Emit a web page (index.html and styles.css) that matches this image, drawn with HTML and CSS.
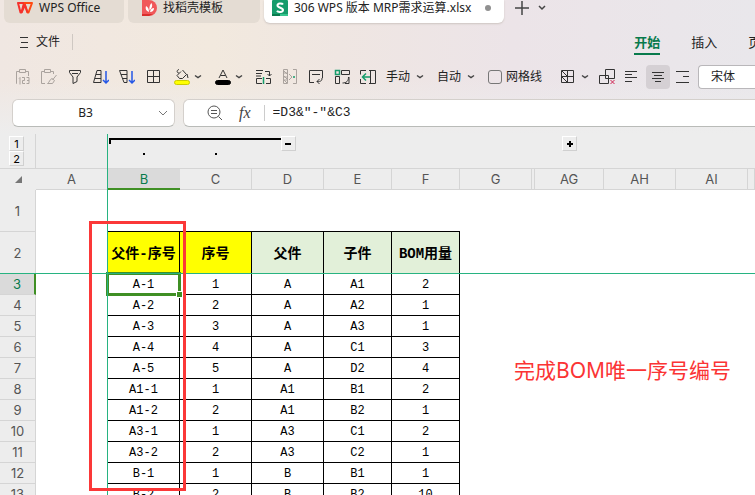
FILE: index.html
```html
<!DOCTYPE html>
<html lang="zh-CN">
<head>
<meta charset="utf-8">
<title>306 WPS 版本 MRP需求运算.xlsx</title>
<link rel="stylesheet" href="styles.css">
</head>
<body>
<header class="chrome">
  <div class="tabs">
    <button class="tab tab-home"><svg width="16" height="12" viewBox="0 0 16 12" fill="none" stroke="#f5322d" stroke-width="2" stroke-linejoin="round"><path d="M1 1h6L4.500 10.500H3.500z"/><path d="M7 1h8l-3.500 9.500h-1L7.500 2" stroke="#ff4a12"/><path d="M4.500 10.500L8 3l2.500 7.500"/></svg>WPS Office</button>
    <button class="tab tab-docer"><svg width="15" height="16" viewBox="0 0 15 16"><path d="M0 0h7a8 8 0 0 1 0 16H0z" fill="#f0585a"/><path d="M0 14h11l-4 2H0z" fill="#d92f2c"/><path d="M7 12C4 11 3 9 4 6c2 1 3 3 3 6zM7.500 10.500C7 7 8 4.500 9.500 3c1.500 2.500.5 5-2 7.500zM8 12c.5-2.500 2-4 4-4 0 2.500-1.500 4-4 4z" fill="#fff"/></svg>找稻壳模板</button>
    <button class="tab tab-file"><svg width="16" height="16" viewBox="0 0 16 16"><rect width="16" height="16" rx="1" fill="#159c6b"/><path d="M0 14h8v2H0z" fill="#087a4c"/><path d="M8 14h8v2H8z" fill="#35c58d"/><path d="M11 4.500C10 3 5.500 3 5.500 5.500S11 7.500 11 10s-5 2.500-6 .8" fill="none" stroke="#fff" stroke-width="2"/></svg><span class="file-name">306 WPS 版本 MRP需求运算.xlsx</span><i class="dirty"></i></button>
    <button class="add" aria-label="新建"><svg width="14" height="14" viewBox="0 0 14 14" stroke="#444" stroke-width="1.500"><path d="M7 0v14M0 7h14"/></svg></button>
    <button aria-label="标签列表"><svg width="8" height="6" viewBox="0 0 8 6" fill="none" stroke="#444" stroke-width="1.500"><path d="M1 1l3 3 3-3"/></svg></button>
  </div>

  <div class="menu">
    <div class="menu-left"><button class="file-menu"><svg width="8" height="12" viewBox="0 0 8 12" stroke="#333"><path d="M0 1.500h8M1 6.500h7M0 11.500h8"/></svg>文件</button></div>
    <nav><a href="#" class="current">开始</a><a href="#">插入</a><a href="#">页面</a></nav>
  </div>

  <div class="toolbar">
    <div class="group">
      <button aria-label="粘贴为数值"><svg class="ico dim" viewBox="0 0 16 16"><path d="M2 14.500H1.500v-12H4M11 2.500h2.500V7M4.500 .5h6v3h-6z"/><path d="M4 9.500l1-1v7M7 8.500h2.500v3H7.500v3H10M11.500 8.500H14v6h-2.500M12 11.500h2"/></svg></button>
      <button aria-label="格式刷"><svg class="ico dim" viewBox="0 0 16 16"><path d="M4 14.500H.5v-12H3M10 2.500h2.500V5M3.500 .5h6v3h-6z"/><path d="M15.500 6l-4 5M11 9.500l2.500 2-2 3H6.500c2-1 2-4 4.500-5z"/></svg></button>
      <button aria-label="筛选"><svg class="ico" viewBox="0 0 16 16"><path d="M2.500 1.500h11v2L10 8v4.500L6 14.500V8L2.500 3.500zM5 4.500h6"/></svg></button>
      <button aria-label="升序"><svg class="ico" viewBox="0 0 16 16"><path d="M4 1.500h4v12H.5zM3 5.500h5M2 9.500h6"/><path class="blue" d="M13 2v12M10 11l3 3 3-3"/></svg></button>
      <button aria-label="降序"><svg class="ico" viewBox="0 0 16 16"><path d="M.5 1.500H8v12H5zM2 5.500h6M3 9.500h5"/><path class="blue" d="M13 2v12M10 11l3 3 3-3"/></svg></button>
      <button aria-label="边框"><svg class="ico" viewBox="0 0 16 16"><path d="M2.500 1.500h12v12h-12zM8.500 1.500v12M2.500 7.500h12"/></svg></button>
    </div>
    <button class="split gap-md" aria-label="填充颜色"><svg class="ico" viewBox="0 0 16 16"><path d="M8.500 1l4 4.500-4 4H5.500l-2.500-3 4-4M5 .5C2.500 1 2.500 4 5 4M13 5l1 4"/><rect x=".5" y="11.500" width="15" height="4" rx="2" class="swatch-yellow"/></svg><svg class="caret" viewBox="0 0 8 6"><path d="M1 1.500l3 2 3-2"/></svg></button>
    <button class="split gap-md" aria-label="字体颜色"><svg class="ico" viewBox="0 0 16 16"><path d="M4 9l4-8 4 8M5.500 6.500h5"/><rect x=".5" y="11.500" width="15" height="4" rx="2" class="swatch-black"/></svg><svg class="caret" viewBox="0 0 8 6"><path d="M1 1.500l3 2 3-2"/></svg></button>
    <div class="group gap-md">
      <button aria-label="转置"><svg class="ico" viewBox="0 0 16 16"><path d="M0 1.500h7M0 4.500h6M9 2.500h4.500V7M11.500 5l2 2 2-2M6 9.500H.5v5H6M10 9.500h4.500v5H10M0 7h5"/><path class="green" d="M7.500 8v7"/></svg></button>
      <button aria-label="拆分"><svg class="ico dim" viewBox="0 0 16 16"><path d="M1.500.5h4v14h-4zM1.500 4h4M1.500 8h4M1.500 11h4M2 2l3 3M2 7l3 3M2 11l3 3M11 .5h3.500v14H11M7 5l3 3-3 3"/><path class="green" d="M11 8h2"/></svg></button>
      <button aria-label="自动换行"><svg class="ico" viewBox="0 0 16 16"><path d="M6 13.500H1.500v-12h13V9M4 5.500h8M14 9c0 3-1 3.500-5 3.500M11.500 10L9 12.500l2.500 2.500"/></svg></button>
      <button aria-label="转换"><svg class="ico" viewBox="0 0 16 16"><path d="M7.500 1.500h8v4h-8zM1.500 7.500v7h4v-7zM14.500 8c0 4-2 6-6 6M15 8v6.500H11"/><path class="green" d="M1.500 1.500h4v4h-4z"/></svg></button>
      <button aria-label="合并居中"><svg class="ico" viewBox="0 0 16 16"><path d="M6 1.500H.5v4M.5 10v4.500H6M9 1.500h6.500v13H9M10.500 1.500v13"/><path class="green" d="M3 8h7M6 4.500L2.500 8 6 11.500"/></svg></button>
    </div>
    <button class="drop gap-sm">手动<svg class="caret" viewBox="0 0 8 6"><path d="M1 1.500l3 2 3-2"/></svg></button>
    <button class="drop gap-md">自动<svg class="caret" viewBox="0 0 8 6"><path d="M1 1.500l3 2 3-2"/></svg></button>
    <label class="check gap-md"><input type="checkbox">网格线</label>
    <button class="split gap-lg" aria-label="表格样式"><svg class="ico" viewBox="0 0 16 16"><path d="M.5 1.500h12v12H.5zM6.500 1.500v12M.5 7.500h12M1 2l5 5M1 8l5 5"/></svg><svg class="caret" viewBox="0 0 8 6"><path d="M1 1.500l3 2 3-2"/></svg></button>
    <button class="gap-sm" aria-label="清除"><svg class="ico" viewBox="0 0 16 16"><path d="M6.500.5h9v9h-9zM9.500 10v4.500h-9v-8h9z"/><path class="red" d="M11.500 11l4 4M15.500 11l-4 4"/></svg></button>
    <button class="gap-sm" aria-label="左对齐"><svg class="ico" viewBox="0 0 16 16"><path d="M0 2.500h12M0 5.500h7M0 8.500h12M0 12.500h7"/></svg></button>
    <button class="align-on" aria-label="居中"><svg class="ico" viewBox="0 0 16 16"><path d="M2 3.500h12M4 6.500h8M2 9.500h12M5 12.500h6"/></svg></button>
    <button aria-label="右对齐"><svg class="ico" viewBox="0 0 16 16"><path d="M1 2.500h13M8 7.500h6M1 13.500h13"/></svg></button>
    <select class="font-select" aria-label="字体"><option>宋体</option></select>
  </div>

  <div class="formula-row">
    <div class="name-box"><input type="text" value="B3" aria-label="名称框"><svg width="10" height="6" viewBox="0 0 10 6" fill="none" stroke="#777"><path d="M1 1l4 4 4-4"/></svg></div>
    <div class="formula">
      <button aria-label="缩小"><svg width="16" height="16" viewBox="0 0 16 16" fill="none" stroke="#555"><circle cx="7" cy="7" r="6"/><path d="M11.500 11.500L15 15M4 5.500h6M4 8.500h6"/></svg></button>
      <button class="fx" aria-label="插入函数"><i>fx</i></button>
      <input type="text" value="=D3&amp;&quot;-&quot;&amp;C3" aria-label="编辑栏">
    </div>
  </div>
</header>

<main class="sheet">
  <div class="outline">
    <div class="levels"><button>1</button><button>2</button></div>
    <span class="bracket"></span>
    <span class="dot dot-b"></span><span class="dot dot-c"></span>
    <button class="toggle toggle-d" aria-label="折叠"><svg width="8" height="8" viewBox="0 0 8 8"><path d="M1 3h6v2H1z"/></svg></button>
    <button class="toggle toggle-ag" aria-label="展开"><svg width="8" height="8" viewBox="0 0 8 8"><path d="M1 3h6v2H1zM3 1h2v6H3z"/></svg></button>
  </div>

  <table>
    <colgroup><col class="w36"><col class="w72"><col class="w72"><col class="w72"><col class="w72"><col class="w68"><col class="w68"><col class="w72"><col class="w3"><col class="w69"><col class="w72"><col class="w72"><col></colgroup>
    <thead>
      <tr><th class="corner"><svg width="7" height="7" viewBox="0 0 7 7" fill="#777"><path d="M7 0v7H0z"/></svg></th><th>A</th><th class="active">B</th><th>C</th><th>D</th><th>E</th><th>F</th><th>G</th><th></th><th>AG</th><th>AH</th><th>AI</th><th></th></tr>
    </thead>
    <tbody>
      <tr class="tall above"><th>1</th><td></td><td></td><td></td><td></td><td></td><td></td></tr>
      <tr class="tall heads"><th>2</th><td></td><td class="yellow">父件-序号</td><td class="yellow">序号</td><td class="mint">父件</td><td class="mint">子件</td><td class="mint">BOM用量</td></tr>
      <tr class="current-row"><th>3</th><td></td><td class="selected">A-1<i class="handle"></i></td><td>1</td><td>A</td><td>A1</td><td>2</td></tr>
      <tr><th>4</th><td></td><td>A-2</td><td>2</td><td>A</td><td>A2</td><td>1</td></tr>
      <tr><th>5</th><td></td><td>A-3</td><td>3</td><td>A</td><td>A3</td><td>1</td></tr>
      <tr><th>6</th><td></td><td>A-4</td><td>4</td><td>A</td><td>C1</td><td>3</td></tr>
      <tr><th>7</th><td></td><td>A-5</td><td>5</td><td>A</td><td>D2</td><td>4</td></tr>
      <tr><th>8</th><td></td><td>A1-1</td><td>1</td><td>A1</td><td>B1</td><td>2</td></tr>
      <tr><th>9</th><td></td><td>A1-2</td><td>2</td><td>A1</td><td>B2</td><td>1</td></tr>
      <tr><th>10</th><td></td><td>A3-1</td><td>1</td><td>A3</td><td>C1</td><td>2</td></tr>
      <tr><th>11</th><td></td><td>A3-2</td><td>2</td><td>A3</td><td>C2</td><td>1</td></tr>
      <tr><th>12</th><td></td><td>B-1</td><td>1</td><td>B</td><td>B1</td><td>1</td></tr>
      <tr><th>13</th><td></td><td>B-2</td><td>2</td><td>B</td><td>B2</td><td>10</td></tr>
    </tbody>
  </table>
  <div class="freeze-v"></div>
  <div class="freeze-h"></div>
  <div class="mark-box"></div>
  <p class="note">完成BOM唯一序号编号</p>
</main>
</body>
</html>
```

FILE: styles.css
```css
* { box-sizing: border-box; }
body {
  margin: 0;
  height: 100vh;
  overflow: hidden;
  display: flex;
  flex-direction: column;
  background: #fff;
  color: #222;
  font: 12px/16px "Noto Sans", "Noto Sans CJK SC", sans-serif;
}
button, input, select { font: inherit; color: inherit; }
button { border: 0; padding: 0; background: none; display: flex; align-items: center; }
svg { display: block; flex: none; }

.chrome {
  overflow: hidden;
  background:
    linear-gradient(to bottom, rgba(237,237,237,0) 60%, #ededed),
    linear-gradient(to right, #f0e7e2, #f2e9de 28%, #efe6e2 45%, #ece4e8 68%, #e9e7eb);
}

.tabs { display: flex; height: 23px; padding-left: 4px; align-items: center; }
.tab { height: 23px; margin-right: 4px; padding-bottom: 7px; border-radius: 0 0 6px 6px; background: #e4dcd3; }
.tab-home { width: 120px; padding-left: 13px; gap: 6px; }
.tab-docer { width: 132px; padding-left: 14px; gap: 6px; }
.tab-file { width: 240px; padding-left: 8px; gap: 6px; background: #fff; box-shadow: 0 1px 2px #cdc5c1; }
.file-name { white-space: nowrap; }
.dirty { width: 6px; height: 6px; margin: 0 13px 0 auto; border-radius: 50%; background: #909090; }
.add { margin: 0 9px 0 7px; }
.tabs > .add, .tabs > .add + button { padding-bottom: 7px; }

.menu { display: flex; align-items: center; height: 37px; font-size: 13px; }
.menu-left { flex: 0 0 84%; }
.file-menu { padding: 0 12px 0 20px; gap: 8px; border-right: 1px solid #cfc8c2; font-size: 12px; }
nav { display: flex; gap: 31px; white-space: nowrap; }
nav a { color: #222; text-decoration: none; padding: 5px 0 3px; border-bottom: 2px solid transparent; }
nav .current { color: #087a4c; font-weight: 700; border-color: #087a4c; }

.toolbar { display: flex; align-items: center; height: 34px; padding-left: 15px; white-space: nowrap; }
.toolbar > * { flex: none; }
.group { display: flex; gap: 10px; }
.gap-sm { margin-left: 10px; }
.gap-md { margin-left: 13px; }
.gap-lg { margin-left: 19px; }
.split { gap: 4px; }
.drop { gap: 6px; }
.ico { width: 16px; height: 16px; fill: none; stroke: #333; }
.dim { stroke: #aaa39e; }
.blue { stroke: #2457e6; stroke-width: 1.5; }
.green { stroke: #159c6b; stroke-width: 1.5; }
.red { stroke: #cf2350; }
.swatch-yellow { fill: #ff0; stroke: #cccc00; }
.swatch-black { fill: #000; stroke: #000; }
.caret { width: 8px; height: 6px; fill: none; stroke: #444; stroke-width: 1.5; }
.check { display: flex; align-items: center; gap: 4px; }
.check input { appearance: none; width: 14px; height: 14px; margin: 0; border: 1px solid #777; border-radius: 3px; }
.align-on { margin: 0 5px; width: 24px; height: 24px; border-radius: 4px; justify-content: center; background: #d5d0d4; }
.toolbar .font-select { appearance: none; flex: 1; min-width: 0; margin-left: 7px; height: 24px; padding: 0 12px; border: 1px solid #b9b7ba; border-right: 0; border-radius: 4px 0 0 4px; background: #fff; }

.formula-row { display: flex; gap: 8px; padding: 5px 0 7px 12px; }
.name-box, .formula { display: flex; align-items: center; height: 28px; border: 1px solid #d4d0cc; border-bottom-color: #b9bbb8; background: #fff; }
.name-box { width: 163px; padding-right: 6px; border-radius: 6px; }
.formula { flex: 1; padding-left: 23px; border-right: 0; border-radius: 6px 0 0 6px; }
.formula-row input { border: 0; padding: 0; background: none; min-width: 0; flex: 1; }
.name-box input { text-align: center; font-size: 12px; }
.fx { margin: 0 13px 0 16px; font: 16px/16px "Liberation Serif", serif; color: #444; }
.formula .fx + input { padding-left: 8px; border-left: 1px solid #ccc; height: 16px; font: 13px/16px "Liberation Mono", monospace; }

.sheet { position: relative; flex: 1; min-height: 0; overflow: hidden; }
.outline {
  display: grid;
  grid-template-columns: 36px 72px 72px 72px 72px 68px 68px 75px 69px;
  grid-template-rows: 34px;
  background: #ededed;
  border-bottom: 1px solid #d5d5d5;
}
.outline > * { grid-row: 1; }
.levels { border-right: 1px solid #d5d5d5; padding: 2px 0 0 9px; font: 11px/12px Inter, sans-serif; color: #000; }
.levels button, .toggle { width: 15px; height: 15px; justify-content: center; border: 1px solid #fff; border-right-color: #d0d0d0; border-bottom-color: #d0d0d0; }
.bracket { grid-column: 3 / 5; margin: 4px -30px 0 1px; height: 6px; border: solid #000; border-width: 2px 0 0 2px; }
.dot { width: 2px; height: 2px; margin-top: 19px; justify-self: center; background: #000; }
.dot-b { grid-column: 3; }
.dot-c { grid-column: 4; }
.toggle { margin-top: 2px; justify-self: center; background: #ededed; z-index: 1; }
.toggle-d { grid-column: 5; }
.toggle-ag { grid-column: 9; }

table { table-layout: fixed; width: 100%; border-collapse: separate; border-spacing: 0; }
.w36 { width: 36px; }
.w72 { width: 72px; }
.w68 { width: 68px; }
.w69 { width: 69px; }
.w3 { width: 3px; }
th, td { padding: 0; height: 21px; text-align: center; line-height: 18px; white-space: nowrap; }
th { background: #ededed; color: #555; font-family: Inter, sans-serif; font-size: 13px; font-weight: 400; border: solid #d5d5d5; border-width: 0 1px 1px 0; }
td { padding-top: 2px; font-family: "Liberation Mono", "Noto Sans CJK SC", monospace; color: #000; }
td:nth-child(n+3) { border: solid #000; border-width: 0 1px 1px 0; }
.tall th, .tall td { height: 42px; }
.above td:nth-child(n+3) { border-right: 0; }
.heads td { font-size: 14px; font-weight: 700; }
.corner { border-color: transparent; background-clip: border-box; }
.corner svg { margin: 0 0 0 15px; }
.active { background: #dadada; color: #087a4c; border-right: 0; border-bottom: 2px solid #3f8f24; }
.current-row th { background: #dadada; color: #087a4c; border-right: 2px solid #3f8f24; }
.yellow { background: #ff0; }
.mint { background: #e2f0d9; }
.selected { position: relative; }
.selected::before { content: ""; position: absolute; inset: -2px; border: 3px solid #3f8f24; }
.handle { position: absolute; right: -4px; bottom: -4px; width: 7px; height: 7px; border: 1px solid #fff; background: #3f8f24; }

.freeze-v { position: absolute; left: 107px; top: 0; bottom: 0; width: 1px; background: #27b381; }
.freeze-h { position: absolute; left: 0; right: 0; top: 139px; height: 1px; background: #27b381; }
.mark-box { position: absolute; left: 89px; top: 87px; width: 97px; height: 270px; border: 3px solid #fb3838; }
.note { position: absolute; left: 514px; top: 221px; margin: 0; color: #fb3434; font-size: 21px; line-height: 30px; white-space: nowrap; }
```
